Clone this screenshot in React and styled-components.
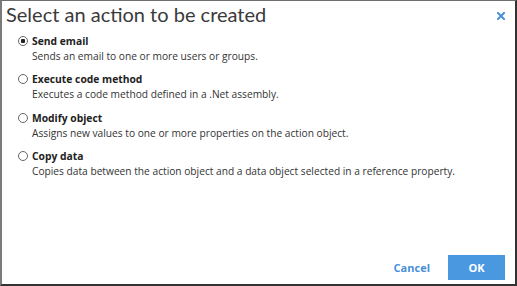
import React from 'react';
import styled, { createGlobalStyle } from 'styled-components';

const GlobalStyle = createGlobalStyle`
  html, body {
    margin: 0;
    padding: 0;
    background: #fff;
  }
`;

const actions = [
  { id: 'email', label: 'Send email', text: 'Sends an email to one or more users or groups.' },
  { id: 'code', label: 'Execute code method', text: 'Executes a code method defined in a .Net assembly.' },
  { id: 'modify', label: 'Modify object', text: 'Assigns new values to one or more properties on the action object.' },
  { id: 'copy', label: 'Copy data', text: 'Copies data between the action object and a data object selected in a reference property.' },
];

function App() {
  const [selected, setSelected] = React.useState('email');
  return (
    <>
      <GlobalStyle />
      <Dialog>
        <Header>
          <Title>Select an action to be created</Title>
          <CloseButton aria-label="Close">
            <svg width="8" height="8" viewBox="0 0 8 8">
              <path d="M1 1 L7 7 M7 1 L1 7" stroke="#4a90d9" strokeWidth="2" strokeLinecap="square" />
            </svg>
          </CloseButton>
        </Header>
        <Options>
          {actions.map(a => (
            <Option key={a.id}>
              <LabelRow>
                <Radio checked={selected === a.id} onClick={() => setSelected(a.id)} />
                <Label>{a.label}</Label>
              </LabelRow>
              <Description>{a.text}</Description>
            </Option>
          ))}
        </Options>
        <Footer>
          <CancelButton>Cancel</CancelButton>
          <OkButton>OK</OkButton>
        </Footer>
      </Dialog>
    </>
  );
}

export default App;

const Dialog = styled.div`
  box-sizing: border-box;
  width: 517px;
  height: 286px;
  display: flex;
  flex-direction: column;
  background: #fff;
  border-top: 1px solid #6e6e6e;
  border-left: 2px solid #7a7a7a;
  border-right: 2px solid #333;
  border-bottom: 2px solid #333;
  font-family: 'Open Sans', sans-serif;
  color: #333;
`;

const Header = styled.div`
  display: flex;
  align-items: flex-start;
  justify-content: space-between;
  padding: 1px 10px 0 4px;
`;

const Title = styled.h1`
  margin: 0;
  font-family: Lato, 'Open Sans', sans-serif;
  font-weight: 400;
  font-size: 20px;
  line-height: 24px;
  color: #3a3a3a;
`;

const CloseButton = styled.span`
  display: flex;
  margin-top: 10px;
  cursor: pointer;
`;

const Options = styled.div`
  display: flex;
  flex-direction: column;
  gap: 7.4px;
  padding: 7px 0 0 16px;
  flex: 1;
`;

const Option = styled.div`
  display: flex;
  flex-direction: column;
`;

const LabelRow = styled.div`
  display: flex;
  align-items: center;
  gap: 4px;
  height: 16px;
`;

const Radio = styled.span`
  box-sizing: border-box;
  width: 10px;
  height: 10px;
  border-radius: 50%;
  border: 1px solid #666;
  background: ${p => (p.checked ? 'radial-gradient(circle, #222 0 2px, #fff 2.5px)' : '#fff')};
  cursor: pointer;
`;

const Label = styled.span`
  font-weight: 700;
  font-size: 10.3px;
  color: #222;
`;

const Description = styled.div`
  font-size: 10.2px;
  line-height: 15px;
  padding-left: 14px;
  color: #333;
`;

const Footer = styled.div`
  display: flex;
  justify-content: flex-end;
  align-items: center;
  gap: 18px;
  padding: 0 10px 4px 0;
`;

const CancelButton = styled.button`
  border: none;
  background: none;
  padding: 0;
  font-family: 'Open Sans', sans-serif;
  font-weight: 700;
  font-size: 11px;
  color: #4a90d9;
  cursor: pointer;
`;

const OkButton = styled.button`
  width: 57px;
  height: 25px;
  border: none;
  background: #4a98e0;
  color: #fff;
  font-family: 'Open Sans', sans-serif;
  font-weight: 700;
  font-size: 11px;
  cursor: pointer;
`;
